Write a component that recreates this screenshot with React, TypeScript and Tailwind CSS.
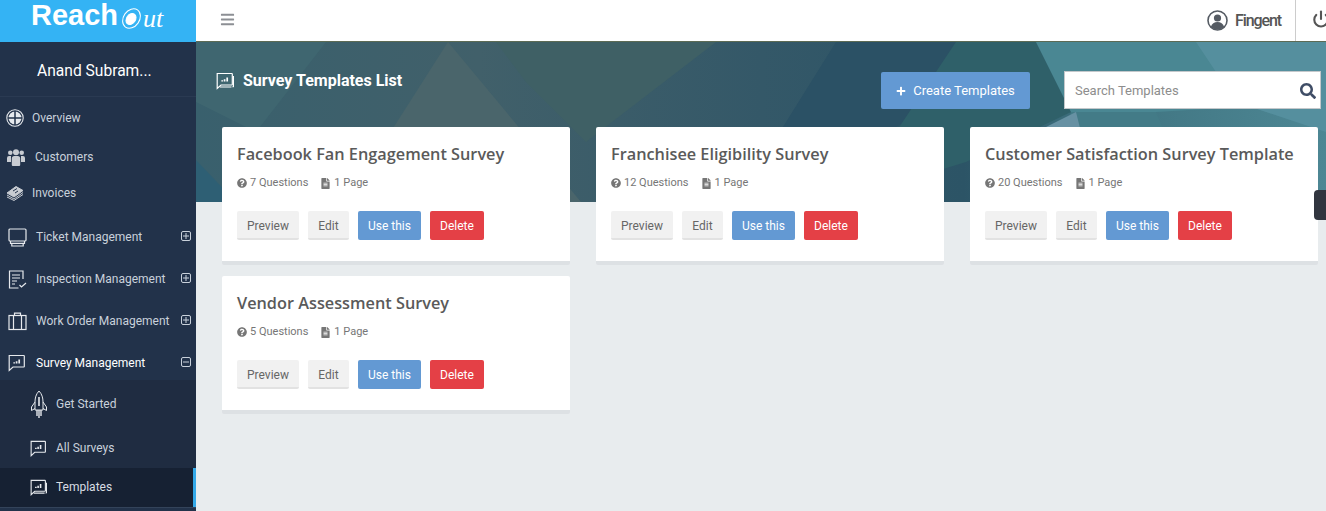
import { Power } from 'lucide-react';
import { FaBars, FaFileAlt, FaPlus, FaQuestionCircle, FaSearch } from 'react-icons/fa';
import type { ReactNode } from 'react';

const surveys = [
  { title: 'Facebook Fan Engagement Survey', questions: '7 Questions' },
  { title: 'Franchisee Eligibility Survey', questions: '12 Questions' },
  { title: 'Customer Satisfaction Survey Template', questions: '20 Questions' },
  { title: 'Vendor Assessment Survey', questions: '5 Questions' },
];

function ChatIcon({ size = 18, double = false }: { size?: number; double?: boolean }) {
  return (
    <svg width={size} height={size} viewBox="0 0 18 18" fill="none" stroke="currentColor" strokeWidth="1.2">
      <path d="M1.2 1.500h14.600a.5.5 0 0 1 .5.5v10.500a.5.5 0 0 1-.5.5H5l-3.800 3.500z" />
      {double && <path d="M4 15h11.500M17.500 4v10.500l-1 .5" />}
      <path d="M6.200 8.200v1.400M8.600 7.200v2.400M11.200 5.400v4.200" strokeWidth="1.700" />
    </svg>
  );
}

function GlobeIcon() {
  return (
    <svg width="18" height="18" viewBox="0 0 18 18" fill="none" stroke="currentColor">
      <circle cx="9" cy="9" r="8.200" strokeWidth="1.100" />
      <circle cx="9" cy="9" r="6.500" fill="currentColor" stroke="none" />
      <path d="M9 2v14M2 9h14" stroke="#22324a" strokeWidth="1.500" />
    </svg>
  );
}

function PeopleIcon() {
  return (
    <svg width="18" height="17" viewBox="0 0 18 17" fill="currentColor">
      <circle cx="3.300" cy="3.800" r="2.300" />
      <circle cx="14.700" cy="3.800" r="2.300" />
      <circle cx="9" cy="3.300" r="3" />
      <path d="M0 9a2 2 0 0 1 2-2h2v6H0zM14 7h2a2 2 0 0 1 2 2v4h-4z" />
      <path d="M4.800 9.500a2.500 2.500 0 0 1 2.500-2.500h3.400a2.500 2.500 0 0 1 2.500 2.500V16a1 1 0 0 1-1 1H5.800a1 1 0 0 1-1-1z" />
    </svg>
  );
}

function MoneyIcon() {
  return (
    <svg width="18" height="16" viewBox="0 0 18 16" fill="none" stroke="currentColor" strokeWidth="1">
      <path d="M1 8l9-6.500 7 4-9 6.500z" fill="currentColor" />
      <path d="M1 10l7 4 9-6.500M1 12l7 3.500 9-6" />
      <path d="M7 6l4-2.500M9 8l3-2" stroke="#22324a" />
    </svg>
  );
}

function ScreenIcon() {
  return (
    <svg width="19" height="19" viewBox="0 0 19 19" fill="none" stroke="currentColor" strokeWidth="1.200">
      <rect x="1" y="1" width="17" height="12" rx="1" />
      <path d="M2.500 13v2.400h14V13M3.800 15.400v2.600h11.400v-2.600" />
    </svg>
  );
}

function ChecklistIcon() {
  return (
    <svg width="19" height="19" viewBox="0 0 19 19" fill="none" stroke="currentColor" strokeWidth="1.200">
      <path d="M15 9V1H1.500v17h9" />
      <path d="M4 5h8M4 8h8M4 11h5M4 14h3" />
      <path d="M11.500 15l2 2 4.500-4" />
    </svg>
  );
}

function CaseIcon() {
  return (
    <svg width="19" height="19" viewBox="0 0 19 19" fill="none" stroke="currentColor" strokeWidth="1.200">
      <rect x="1" y="3.500" width="17" height="14" />
      <path d="M5.500 3.500v14M13.500 3.500v14M6.500 3.500V1.200h6v2.300" />
    </svg>
  );
}

function RocketIcon() {
  return (
    <svg width="18" height="29" viewBox="0 0 18 29" fill="none" stroke="currentColor" strokeWidth="1">
      <path d="M9 1C6 4 5 8 5 12v8h8v-8c0-4-1-8-4-11z" />
      <path d="M9 7v9" strokeWidth="1.600" />
      <path d="M5 12l-3.500 5v3.500L5 18.500M13 12l3.500 5v3.500L13 18.500" />
      <path d="M7 20v6M9 20v8M11 20v6" strokeWidth="1.400" />
    </svg>
  );
}

function ToggleIcon({ open }: { open?: boolean }) {
  return (
    <svg width="10" height="10" viewBox="0 0 10 10" fill="none" stroke="currentColor" strokeWidth="1" className="mb-[2px]">
      <rect x="0.500" y="0.500" width="9" height="9" rx="1.500" />
      <path d={open ? 'M2 5h6' : 'M2 5h6M5 2v6'} />
    </svg>
  );
}

function NavRow({ icon, label, open, active, last }: { icon: ReactNode; label: string; open?: boolean; active?: boolean; last?: boolean }) {
  return (
    <div className={`flex items-center pl-2 pr-[5px] text-[12px] ${last ? 'h-[38px] pt-[4px]' : 'h-[42px]'} ${active ? 'text-white' : 'text-[#c9d1db]'}`}>
      <span className="flex w-[28px] text-[#e6e9ed]">{icon}</span>
      <span className="flex-1">{label}</span>
      <span className="text-[#c9d1db]"><ToggleIcon open={open} /></span>
    </div>
  );
}

function Sidebar() {
  return (
    <aside className="flex w-[196px] shrink-0 flex-col bg-[#22324a] font-['Roboto',sans-serif] shadow-[1px_0_0_#cfd5da]">
      <div className="h-[42px] bg-[#34b3f4] font-['Liberation_Sans',sans-serif] text-white">
        <div className="flex h-[30px] items-center pl-[31px]">
          <span className="text-[29px] font-bold leading-none">Reach</span>
          <svg width="23" height="23" viewBox="0 0 23 23" fill="none" stroke="white" className="ml-[2px] mt-[7px]">
            <ellipse cx="11.500" cy="11.500" rx="8" ry="10.500" strokeWidth="1" transform="rotate(35 11.500 11.500)" />
            <ellipse cx="11" cy="12" rx="4.500" ry="6" fill="white" transform="rotate(35 11 12)" />
          </svg>
          <span className="mt-[7px] font-['Liberation_Serif',serif] text-[26px] italic leading-none">ut</span>
        </div>
      </div>
      <div className="flex h-[55px] items-center border-b border-[#2a3a52] pl-[37px] pt-[6px] text-[15.600px] text-white">
        Anand Subram...
      </div>
      <div className="flex h-[42px] items-center pl-[6px] text-[12px] text-[#c9d1db]">
        <span className="flex w-[26px] text-[#e6e9ed]"><GlobeIcon /></span>Overview
      </div>
      <div className="flex h-[36px] items-center pl-[7px] text-[12px] text-[#c9d1db]">
        <span className="flex w-[28px] text-[#c8ccd2]"><PeopleIcon /></span>Customers
      </div>
      <div className="mb-[5px] flex h-[36px] items-center pl-[6px] text-[12px] text-[#c9d1db]">
        <span className="flex w-[26px] text-[#c8ccd2]"><MoneyIcon /></span>Invoices
      </div>
      <NavRow icon={<ScreenIcon />} label="Ticket Management" />
      <NavRow icon={<ChecklistIcon />} label="Inspection Management" />
      <NavRow icon={<CaseIcon />} label="Work Order Management" />
      <NavRow icon={<ChatIcon />} label="Survey Management" open active last />
      <div className="bg-[#1f2c41] text-[12px] text-[#c9d1db]">
        <div className="flex h-[48px] items-center pl-[30px]">
          <span className="flex w-[26px] text-[#e6e9ed]"><RocketIcon /></span>Get Started
        </div>
        <div className="flex h-[40px] items-center pl-[30px]">
          <span className="flex w-[26px] text-[#e6e9ed]"><ChatIcon size={17} /></span>All Surveys
        </div>
        <div className="flex h-[39px] items-center border-r-[3px] border-[#34a9e8] bg-[#162133] pb-[1px] pl-[30px] text-[#d8dde3]">
          <span className="flex w-[26px] text-[#e6e9ed]"><ChatIcon size={17} double /></span>Templates
        </div>
      </div>
      <div className="flex-1 border-t border-[#33435a]" />
    </aside>
  );
}

function Header() {
  return (
    <header className="relative z-10 flex h-[42px] shrink-0 items-center border-b border-[#5d6b55] bg-white pb-[3px] pl-[24px] font-['Roboto',sans-serif] text-[#555]">
      <FaBars size={15} className="text-[#8c8f94]" />
      <div className="ml-auto flex h-full items-center">
        <svg width="21" height="21" viewBox="0 0 21 21" className="mt-[2px]">
          <circle cx="10.500" cy="10.500" r="9.500" fill="white" stroke="#555b63" strokeWidth="1.600" />
          <circle cx="10.500" cy="8" r="3.600" fill="#555b63" />
          <path d="M3.800 17c1-3.500 3.500-5 6.700-5s5.700 1.500 6.700 5a9.500 9.500 0 0 1-13.400 0z" fill="#555b63" />
        </svg>
        <span className="ml-[7px] mt-[3px] text-[16px] font-medium tracking-[-1.100px] text-[#555]">Fingent</span>
        <span className="ml-[14px] mt-[3px] h-[41px] w-px bg-[#ccc]" />
        <Power size={18} strokeWidth={2.800} className="ml-[16px] mr-[-4px] text-[#555]" />
      </div>
    </header>
  );
}

function Banner() {
  return (
    <div className="absolute inset-x-0 top-0 h-[160px] overflow-hidden">
      <svg width="1130" height="160" viewBox="0 0 1130 160">
        <defs>
          <linearGradient id="base" x1="0" y1="0" x2="1" y2="0">
            <stop offset="0" stopColor="#39606d" />
            <stop offset="0.25" stopColor="#41606a" />
            <stop offset="0.5" stopColor="#345868" />
            <stop offset="0.68" stopColor="#2c5466" />
            <stop offset="0.8" stopColor="#3f7380" />
            <stop offset="1" stopColor="#4d8794" />
          </linearGradient>
        </defs>
        <rect width="1130" height="160" fill="url(#base)" />
        <polygon points="0,0 130,0 60,90 0,60" fill="#3f6670" />
        <polygon points="252,0 150,160 385,160" fill="#4a656b" />
        <polygon points="300,0 520,0 390,100 330,40" fill="#3f6065" />
        <polygon points="0,118 40,160 0,160" fill="#2e5f74" />
        <polygon points="640,0 800,0 740,60 660,110 600,160 540,160" fill="#2b5165" />
        <polygon points="760,0 840,0 875,70 770,120 640,160 600,160 700,90" fill="#2f6069" />
        <polygon points="840,0 1130,0 1130,60 960,70 875,70" fill="#4a8793" />
        <polygon points="1000,0 1130,0 1130,90 1040,60" fill="#558f9e" />
        <polygon points="875,70 960,70 1000,160 850,160" fill="#437b87" />
        <polygon points="780,105 830,115 860,160 800,140" fill="#477383" />
        <polygon points="830,95 880,70 895,130" fill="#6791a3" />
        <polygon points="895,130 960,160 850,160" fill="#3d6a7d" />
      </svg>
    </div>
  );
}

function SurveyCard({ title, questions }: { title: string; questions: string }) {
  return (
    <div className="h-[138px] rounded-[2px] border-b-4 border-[#dde1e4] bg-white px-[15px] pt-[16px] font-['Roboto',sans-serif]">
      <h2 className="whitespace-nowrap font-['Open_Sans',sans-serif] text-[16.300px] font-semibold leading-[22px] text-[#5a5a5a]">{title}</h2>
      <div className="mt-[11px] flex h-[14px] items-center text-[11px] text-[#767676]">
        <FaQuestionCircle size={10} className="mr-[3px]" />
        <span>{questions}</span>
        <FaFileAlt size={11} className="ml-[12px] mr-[3px]" />
        <span>1 Page</span>
      </div>
      <div className="mt-[21px] flex gap-[9px] text-[12px]">
        <button className="h-[29px] w-[62px] rounded-[2px] border-b-2 border-[#e2e2e2] bg-[#f1f1f1] pt-[2px] text-[#666]">Preview</button>
        <button className="h-[29px] w-[41px] rounded-[2px] border-b-2 border-[#e2e2e2] bg-[#f1f1f1] pt-[2px] text-[#666]">Edit</button>
        <button className="h-[29px] w-[63px] rounded-[2px] bg-[#6399d3] text-white">Use this</button>
        <button className="h-[29px] w-[54px] rounded-[2px] bg-[#e44046] text-white">Delete</button>
      </div>
    </div>
  );
}

function Content() {
  return (
    <main className="relative flex-1 bg-[#e8ecee] font-['Roboto',sans-serif]">
      <Banner />
      <div className="relative">
        <div className="flex h-[85px] items-start pl-[20px] pr-[5px]">
          <div className="mt-[27px] flex items-center text-white">
            <ChatIcon size={18} double />
            <h1 className="ml-[9px] text-[16px] font-bold">Survey Templates List</h1>
          </div>
          <button className="ml-auto mt-[30px] flex h-[37px] w-[149px] items-center justify-center gap-[7px] rounded-[2px] bg-[#6399d3] text-[13px] text-white">
            <FaPlus size={10} />
            Create Templates
          </button>
          <div className="ml-[34px] mt-[29px] flex h-[38px] w-[257px] items-center border border-[#c4c8cb] bg-white pl-[10px] pr-[4px] pt-[1px]">
            <span className="flex-1 text-[13px] text-[#8d8d8d]">Search Templates</span>
            <FaSearch size={16} className="text-[#3f4d66]" />
          </div>
        </div>
        <div className="grid grid-cols-[348px_348px_348px] gap-x-[26px] gap-y-[11px] pl-[26px]">
          {surveys.map((survey) => (
            <SurveyCard key={survey.title} title={survey.title} questions={survey.questions} />
          ))}
        </div>
      </div>
      <div className="absolute right-0 top-[148px] h-[30px] w-[12px] rounded-l-[4px] bg-[#31353f]" />
    </main>
  );
}

export default function App() {
  return (
    <div className="flex h-[511px] w-[1326px] overflow-hidden">
      <Sidebar />
      <div className="flex min-w-0 flex-1 flex-col">
        <Header />
        <Content />
      </div>
    </div>
  );
}
